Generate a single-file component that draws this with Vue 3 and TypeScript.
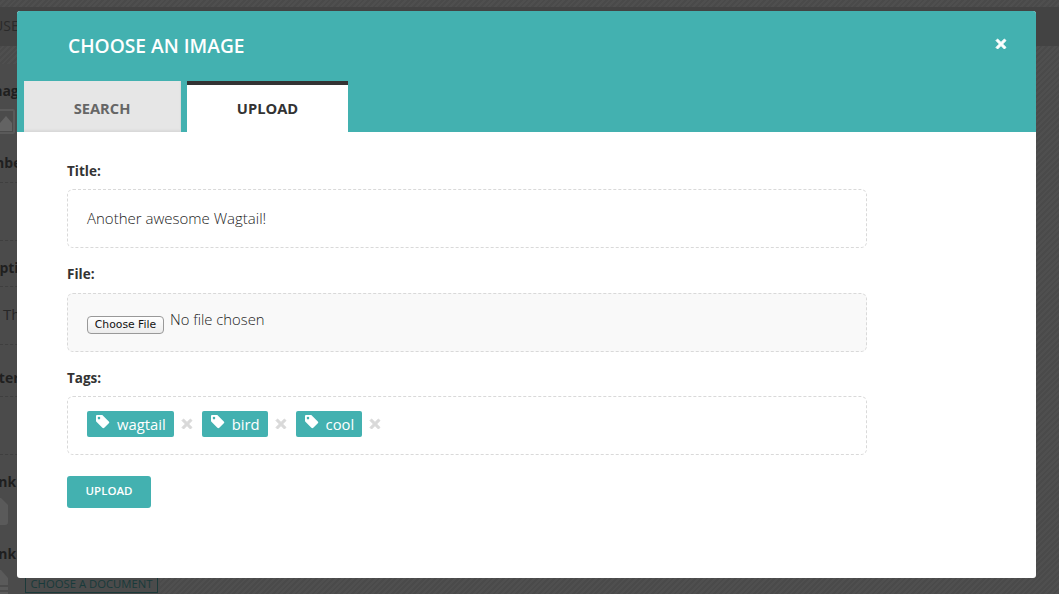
<script setup lang="ts">
const tags: string[] = ['wagtail', 'bird', 'cool']
const crossPath = 'M2.6 1L6 4.4 9.4 1 11 2.6 7.6 6 11 9.4 9.4 11 6 7.6 2.6 11 1 9.4 4.4 6 1 2.6z'
</script>

<template>
  <div class="page">
    <div class="under">
      <div class="under-top"></div>
      <div class="under-bar"><span>USE</span></div>
      <div class="under-hatch"></div>
      <div class="under-form">
        <div class="row image">
          <b>Image</b>
          <svg class="thumb" width="15" height="25" viewBox="0 0 15 25">
            <path d="M-2 1h15a1 1 0 0 1 1 1v21a1 1 0 0 1-1 1h-15" fill="none" stroke="#5a5a5a" stroke-width="2"/>
            <path d="M0 14l6-7 6 7v8H0z" fill="#636363"/>
          </svg>
        </div>
        <div class="row number"><b>Number</b></div>
        <div class="input"></div>
        <div class="row caption"><b>Caption</b></div>
        <div class="input"><span>Th</span></div>
        <div class="row inter"><b>Inter</b></div>
        <div class="input"></div>
        <div class="row link">
          <b>Link</b>
          <svg class="doc" width="8" height="28" viewBox="0 0 8 28"><path d="M0 0h1l7 7v17a3 3 0 0 1-3 3H0z" fill="#5a5a5a"/></svg>
        </div>
        <div class="row link">
          <b>Link</b>
          <svg class="doc" width="10" height="28" viewBox="0 0 10 28"><path d="M0 0h1l7 8v18H0z" fill="#5a5a5a"/><path d="M0 16h10M0 21h10" stroke="#4b4b4b" stroke-width="2"/></svg>
          <span class="doc-btn">CHOOSE A DOCUMENT</span>
        </div>
      </div>
    </div>

    <div class="modal">
      <header class="modal-head">
        <h1>CHOOSE AN IMAGE</h1>
        <button class="close" type="button" aria-label="Close">
          <svg width="12" height="12" viewBox="0 0 12 12"><path :d="crossPath" fill="#fff" stroke="#fff" stroke-width="1" stroke-linejoin="round"/></svg>
        </button>
        <nav class="tabs">
          <a class="tab">SEARCH</a>
          <a class="tab active">UPLOAD</a>
        </nav>
      </header>

      <form class="modal-body" @submit.prevent>
        <label>Title:</label>
        <div class="field title">Another awesome Wagtail!</div>

        <label>File:</label>
        <div class="field file">
          <span class="file-btn">Choose File</span>
          <span class="file-name">No file chosen</span>
        </div>

        <label>Tags:</label>
        <div class="field tags">
          <template v-for="t in tags" :key="t">
            <span class="tag">
              <svg width="15" height="15" viewBox="0 0 15 15"><path fill-rule="evenodd" d="M1 2.2C1 1.5 1.5 1 2.2 1h4.6c.4 0 .7.1 1 .4l6 6c.6.6.6 1.3 0 1.9l-4.5 4.5c-.6.6-1.3.6-1.9 0l-6-6c-.3-.3-.4-.6-.4-1zM4 2.8a1.3 1.3 0 1 0 0 2.6 1.3 1.3 0 0 0 0-2.6z" fill="#fff"/></svg>
              {{ t }}
            </span>
            <svg class="tag-x" width="12" height="12" viewBox="0 0 12 12"><path :d="crossPath" fill="#d9d9d9" stroke="#d9d9d9" stroke-width="1" stroke-linejoin="round"/></svg>
          </template>
        </div>

        <button class="submit" type="submit">UPLOAD</button>
      </form>
    </div>
  </div>
</template>

<style scoped>
.page {
  position: relative;
  width: 1059px;
  height: 594px;
  overflow: hidden;
  font-family: "Open Sans", "Liberation Sans", sans-serif;
  color: #333;
}

.under {
  height: 100%;
  background: repeating-linear-gradient(135deg, #4a4a4a 0, #4a4a4a 2px, #4f4f4f 2px, #4f4f4f 4px);
  color: #1f1f1f;
}
.under-top {
  height: 7px;
}
.under-bar {
  height: 39px;
  background: #434343;
  font-size: 14px;
  line-height: 38px;
  margin-left: -7px;
  color: #2a2a2a;
}
.under-hatch {
  height: 18px;
}
.under-form {
  position: relative;
  width: 160px;
  height: 530px;
  background: #4b4b4b;
  overflow: hidden;
}
.row {
  position: relative;
  box-sizing: border-box;
  padding-top: 17px;
  font-size: 14px;
  line-height: 20px;
  white-space: nowrap;
}
.row b {
  display: block;
}
.image { height: 72px; }
.image b { margin-left: -16px; }
.number { height: 46px; }
.number b { margin-left: -30px; }
.caption { height: 45px; }
.caption b { margin-left: -18px; }
.inter { height: 51px; padding-top: 23px; }
.inter b { margin-left: -15px; }
.link { height: 72px; }
.link b { margin-left: -14px; }
.thumb {
  display: block;
  margin-top: 8px;
}
.doc {
  display: block;
  margin-top: 6px;
}
.input {
  box-sizing: border-box;
  height: 59px;
  border-top: 1px dashed #3f3f3f;
  border-bottom: 1px dashed #3f3f3f;
  padding-left: 3px;
  font-size: 15px;
  line-height: 55px;
  color: #272727;
}
.doc-btn {
  position: absolute;
  left: 25px;
  top: 42px;
  width: 133px;
  height: 24px;
  box-sizing: border-box;
  border: 1px solid #1c3a3a;
  text-align: center;
  line-height: 28px;
  font-size: 11.3px;
  color: #183a3a;
}

.modal {
  position: absolute;
  left: 17px;
  top: 11px;
  width: 1019px;
  height: 567px;
  background: #fff;
  border-radius: 3px;
  overflow: hidden;
}
.modal-head {
  position: relative;
  height: 121px;
  background: #43b1b0;
}
.modal-head h1 {
  margin: 0;
  padding: 22px 0 0 51px;
  font-size: 19.2px;
  line-height: 26px;
  font-weight: 600;
  color: #fff;
}
.close {
  position: absolute;
  top: 27px;
  right: 29px;
  padding: 0;
  border: 0;
  background: none;
  line-height: 0;
}
.tabs {
  position: absolute;
  left: 7px;
  bottom: 0;
  display: flex;
  gap: 6px;
}
.tab {
  width: 157px;
  height: 51px;
  box-sizing: border-box;
  padding-top: 4px;
  background: #e6e6e6;
  box-shadow: inset 0 -3px 2px -1px #d9d9d9;
  border-right: 1px solid #dcdcdc;
  font-size: 14.7px;
  font-weight: 700;
  line-height: 47px;
  text-align: center;
  color: #666;
}
.tab.active {
  width: 161px;
  background: #fff;
  border-top: 4px solid #333;
  border-right: 0;
  padding-top: 0;
  box-shadow: none;
  color: #333;
}

.modal-body {
  padding: 30px 50px 0;
  display: flex;
  flex-direction: column;
  align-items: flex-start;
}
label {
  font-size: 13.5px;
  font-weight: 700;
  line-height: 18px;
}
.field {
  box-sizing: border-box;
  width: 800px;
  height: 59px;
  margin: 9px 0 17px;
  padding: 0 19px;
  border: 1px dashed #d9d9d9;
  border-radius: 6px;
  display: flex;
  align-items: center;
  font-size: 15px;
  font-weight: 300;
  color: #1c1c1c;
}
.title {
  padding-bottom: 2px;
}
.file {
  margin-top: 10px;
  margin-bottom: 17px;
  background: #f9f9f9;
  padding-bottom: 8px;
}
.file-btn {
  box-sizing: border-box;
  width: 77px;
  height: 18px;
  margin-top: 13px;
  margin-right: 6px;
  border: 1px solid #999;
  border-radius: 4px;
  background: linear-gradient(#fff, #ececec);
  font-family: "DejaVu Sans", sans-serif;
  font-size: 10.8px;
  font-weight: 400;
  line-height: 16px;
  text-align: center;
  color: #111;
}
.file-name {
  font-size: 14.8px;
}
.tags {
  margin-bottom: 21px;
  padding-bottom: 4px;
}
.tag {
  display: inline-flex;
  align-items: center;
  gap: 7px;
  height: 26px;
  padding: 0 8px;
  background: #43b1b0;
  border-radius: 2px;
  font-size: 14.8px;
  font-weight: 400;
  color: #fff;
}
.tag svg {
  margin-top: -4px;
}
.tag-x {
  margin: 0 9px 0 7px;
}
.submit {
  width: 84px;
  height: 32px;
  padding: 0 0 4px;
  border: 0;
  border-radius: 3px;
  background: #43b1b0;
  color: #fff;
  font-family: inherit;
  font-size: 11.5px;
  font-weight: 600;
}
</style>
